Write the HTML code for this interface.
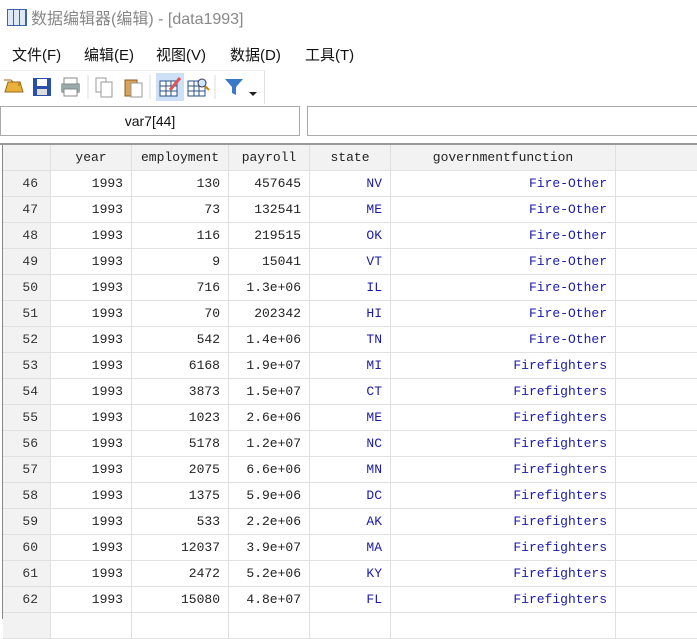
<!DOCTYPE html><html><head><meta charset="utf-8"><style>
body{margin:0;width:697px;height:619px;overflow:hidden;background:#fff;font-family:"Liberation Sans","Noto Sans CJK SC",sans-serif;position:relative}
.a{position:absolute}
.t{font-family:"Liberation Mono",monospace;font-size:13px}
.c{position:absolute;height:25px;line-height:26px;border-right:1px solid #e0e0e0;border-bottom:1px solid #e0e0e0;box-sizing:content-box;text-align:right;padding-right:0;white-space:nowrap}
</style></head><body>
<div class="a" style="left:7px;top:9px;width:18px;height:15px;border:1px solid #3a66a8;background:repeating-linear-gradient(90deg,#dfe8f5 0 5px,#3a66a8 5px 6px)"></div>
<div class="a" style="left:31px;top:5px;font-size:16px;color:#888">数据编辑器(编辑) - [data1993]</div>
<div class="a" style="left:12px;top:44px;font-size:15px;color:#111;word-spacing:0">文件(F)</div>
<div class="a" style="left:84px;top:44px;font-size:15px;color:#111">编辑(E)</div>
<div class="a" style="left:156px;top:44px;font-size:15px;color:#111">视图(V)</div>
<div class="a" style="left:230px;top:44px;font-size:15px;color:#111">数据(D)</div>
<div class="a" style="left:305px;top:44px;font-size:15px;color:#111">工具(T)</div>
<div class="a" style="left:0;top:70px;width:264px;height:33px;border-right:1px solid #e2e2e2;border-top:1px solid #eee"></div>
<svg class="a" style="left:0;top:70px" width="270" height="33">
<path d="M5 22h18l-3-10H8z" fill="#e9b03c" stroke="#9a6a10"/><path d="M4 10h7l2 2h6v4" fill="none" stroke="#9a6a10"/>
<rect x="33" y="8" width="18" height="18" fill="#2a4fa8"/><rect x="37" y="9" width="10" height="7" fill="#fff"/><rect x="37" y="19" width="10" height="6" fill="#ddd"/>
<rect x="61" y="13" width="19" height="10" rx="2" fill="#9aa"/><rect x="64" y="8" width="13" height="6" fill="#fff" stroke="#888"/><rect x="64" y="19" width="13" height="7" fill="#fff" stroke="#888"/>
<line x1="88" y1="5" x2="88" y2="29" stroke="#ddd"/>
<rect x="96" y="8" width="10" height="14" fill="#fff" stroke="#999"/><rect x="101" y="12" width="11" height="15" fill="#fff" stroke="#999"/>
<rect x="125" y="10" width="12" height="16" fill="#d9a25a" stroke="#8a6020"/><rect x="131" y="13" width="11" height="14" fill="#fff" stroke="#999"/>
<line x1="150" y1="5" x2="150" y2="29" stroke="#ddd"/>
<rect x="156" y="3" width="28" height="28" fill="#cde0f5"/>
<rect x="160" y="11" width="17" height="15" fill="#fff" stroke="#2a4f88"/><path d="M160 16h17M160 21h17M166 11v15M171 11v15" stroke="#2a4f88"/><path d="M170 20l10-12" stroke="#d55" stroke-width="3"/>
<rect x="188" y="11" width="17" height="15" fill="#fff" stroke="#2a4f88"/><path d="M188 16h17M188 21h17M194 11v15M199 11v15" stroke="#2a4f88"/><circle cx="202" cy="13" r="4" fill="#cfe8ff" stroke="#335"/><path d="M205 16l4 4" stroke="#c80" stroke-width="2"/>
<line x1="215" y1="5" x2="215" y2="29" stroke="#ddd"/>
<path d="M225 9h18l-7 8v8l-4-2v-6z" fill="#3a78c8"/><path d="M249 22h8l-4 4z" fill="#222"/>
</svg>
<div class="a" style="left:0;top:106px;width:298px;height:28px;border:1px solid #aaa;text-align:center;line-height:29px;font-size:14px;color:#111">var7[44]</div>
<div class="a" style="left:307px;top:106px;width:400px;height:28px;border:1px solid #aaa"></div>
<div class="a" style="left:0;top:143px;width:697px;height:2px;background:#999"></div>
<div class="a" style="left:2px;top:145px;width:1px;height:474px;background:#888"></div>
<div class="a" id="g" style="left:3px;top:145px;width:694px;height:474px"></div>
<script>
var cols=[[0,48],[48,81],[129,97],[226,81],[307,81],[388,225],[613,90]];
var rows=[["46","1993","130","457645","NV","Fire-Other"],["47","1993","73","132541","ME","Fire-Other"],["48","1993","116","219515","OK","Fire-Other"],["49","1993","9","15041","VT","Fire-Other"],["50","1993","716","1.3e+06","IL","Fire-Other"],["51","1993","70","202342","HI","Fire-Other"],["52","1993","542","1.4e+06","TN","Fire-Other"],["53","1993","6168","1.9e+07","MI","Firefighters"],["54","1993","3873","1.5e+07","CT","Firefighters"],["55","1993","1023","2.6e+06","ME","Firefighters"],["56","1993","5178","1.2e+07","NC","Firefighters"],["57","1993","2075","6.6e+06","MN","Firefighters"],["58","1993","1375","5.9e+06","DC","Firefighters"],["59","1993","533","2.2e+06","AK","Firefighters"],["60","1993","12037","3.9e+07","MA","Firefighters"],["61","1993","2472","5.2e+06","KY","Firefighters"],["62","1993","15080","4.8e+07","FL","Firefighters"],["","","","","",""]];
var h=["","year","employment","payroll","state","governmentfunction",""];
var g=document.getElementById('g'),s='';
for(var i=0;i<7;i++){s+='<div class="c t" style="left:'+cols[i][0]+'px;top:0;width:'+(cols[i][1]-1)+'px;background:#f2f2f2;text-align:center;color:#222">'+h[i]+'</div>';}
for(var r=0;r<rows.length;r++){for(var i=0;i<7;i++){var v=i<6?rows[r][i]:'';var st='left:'+cols[i][0]+'px;top:'+(26+r*26)+'px;width:'+(cols[i][1]-9)+'px;padding-right:8px;';
if(i==0)st+='background:#f2f2f2;color:#333;width:'+(cols[i][1]-13)+'px;padding-right:12px;';else if(i>=4)st+='color:#1a1aa8;';else st+='color:#222;';
s+='<div class="c t" style="'+st+'">'+v+'</div>';}}
g.innerHTML=s;
</script>
</body></html>
